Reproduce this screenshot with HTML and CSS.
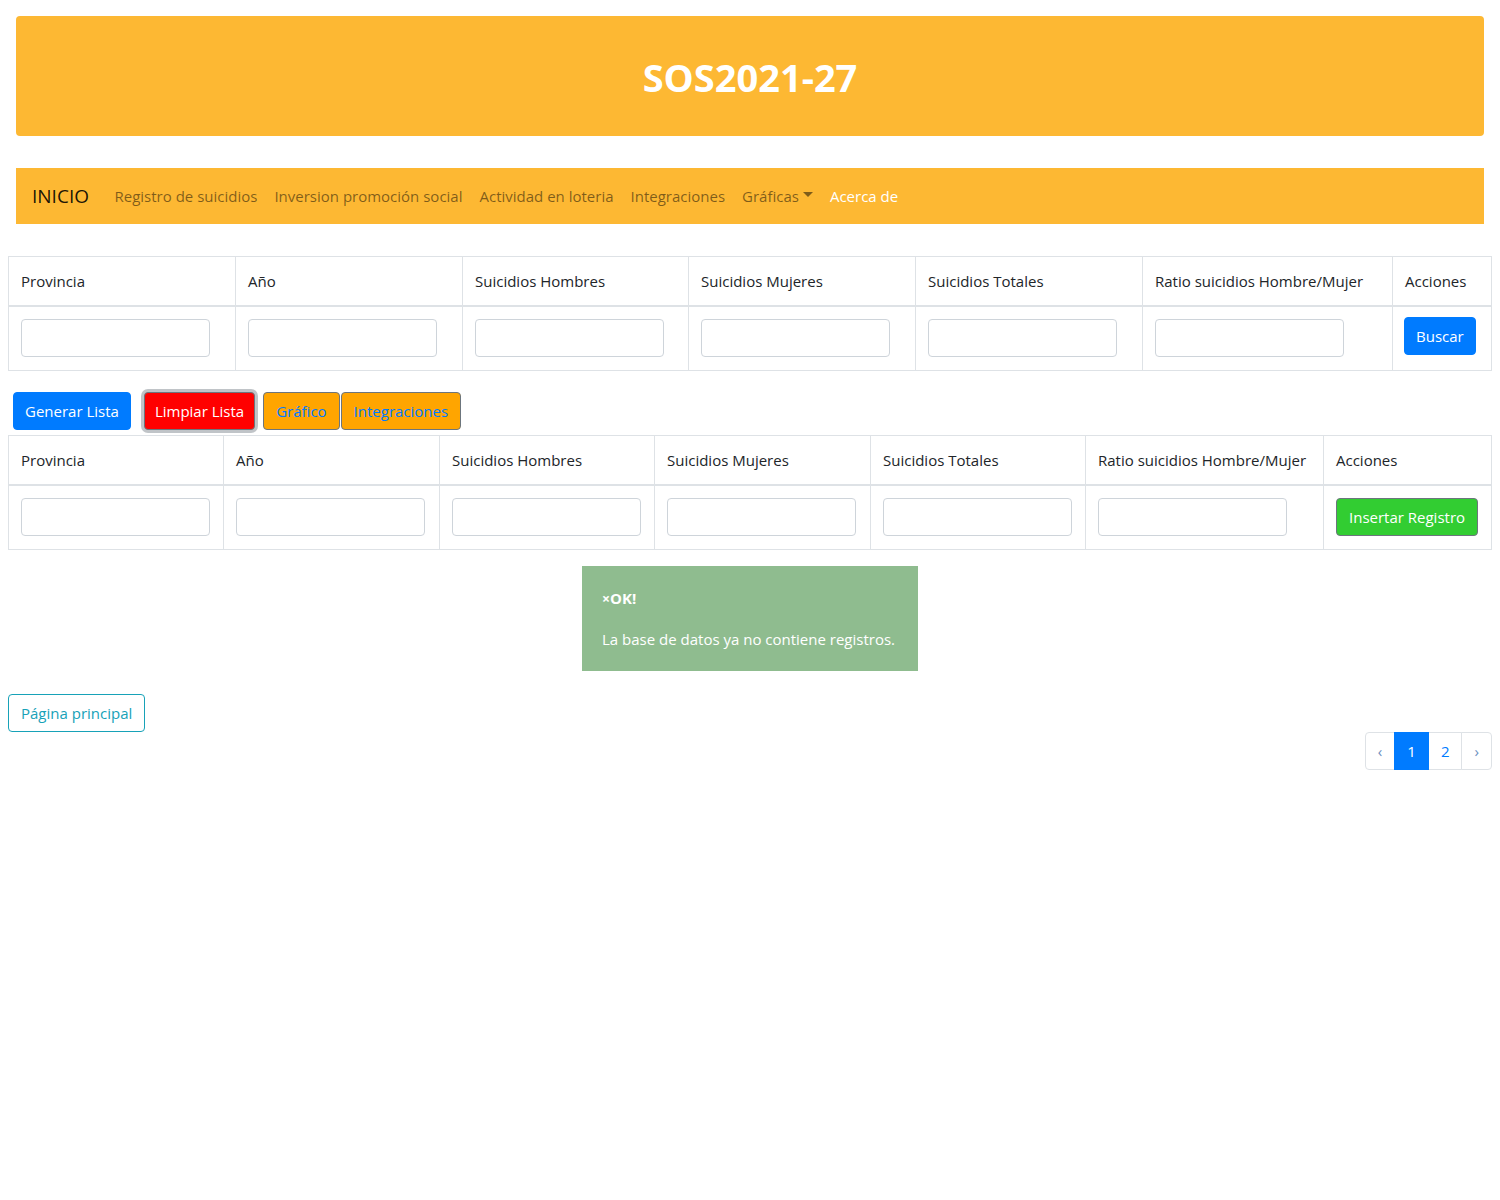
FILE: index.html
```html
<!DOCTYPE html>
<html lang="es">
<head>
<meta charset="utf-8">
<title>SOS2021-27</title>
<link rel="stylesheet" href="styles.css">
</head>
<body>
<header class="jumbotron">
  <h1 class="title">SOS2021-27</h1>
</header>

<nav class="navbar">
  <a class="brand" href="#">INICIO</a>
  <a class="nav-link" href="#">Registro de suicidios</a>
  <a class="nav-link" href="#">Inversion promoción social</a>
  <a class="nav-link" href="#">Actividad en loteria</a>
  <a class="nav-link" href="#">Integraciones</a>
  <a class="nav-link dropdown" href="#">Gráficas<span class="caret"></span></a>
  <a class="nav-link active" href="#">Acerca de</a>
</nav>

<table class="data-table t1">
  <colgroup>
    <col class="c1"><col class="c1"><col class="c1b"><col class="c1"><col class="c1"><col class="c1r"><col>
  </colgroup>
  <thead>
    <tr>
      <th>Provincia</th><th>Año</th><th>Suicidios Hombres</th><th>Suicidios Mujeres</th><th>Suicidios Totales</th><th>Ratio suicidios Hombre/Mujer</th><th>Acciones</th>
    </tr>
  </thead>
  <tbody>
    <tr>
      <td><input class="form-control" type="text"></td>
      <td><input class="form-control" type="text"></td>
      <td><input class="form-control" type="text"></td>
      <td><input class="form-control" type="text"></td>
      <td><input class="form-control" type="text"></td>
      <td><input class="form-control" type="text"></td>
      <td><button class="btn btn-primary">Buscar</button></td>
    </tr>
  </tbody>
</table>

<div class="actions">
  <button class="btn btn-primary gen">Generar Lista</button>
  <button class="btn btn-danger clear">Limpiar Lista</button>
  <button class="btn btn-orange graf">Gráfico</button>
  <button class="btn btn-orange integ">Integraciones</button>
</div>

<table class="data-table t2">
  <colgroup>
    <col class="c2"><col class="c2b"><col class="c2"><col class="c2b"><col class="c2"><col class="c2r"><col>
  </colgroup>
  <thead>
    <tr>
      <th>Provincia</th><th>Año</th><th>Suicidios Hombres</th><th>Suicidios Mujeres</th><th>Suicidios Totales</th><th>Ratio suicidios Hombre/Mujer</th><th>Acciones</th>
    </tr>
  </thead>
  <tbody>
    <tr>
      <td><input class="form-control" type="text"></td>
      <td><input class="form-control" type="text"></td>
      <td><input class="form-control" type="text"></td>
      <td><input class="form-control" type="text"></td>
      <td><input class="form-control" type="text"></td>
      <td><input class="form-control" type="text"></td>
      <td><button class="btn btn-green">Insertar Registro</button></td>
    </tr>
  </tbody>
</table>

<div class="alert-wrap">
  <div class="alert">
    <p class="alert-title"><span class="close">×</span>OK!</p>
    <p class="alert-text">La base de datos ya no contiene registros.</p>
  </div>
</div>

<div class="home-row">
  <button class="btn btn-outline-info">Página principal</button>
</div>

<div class="pager-row">
  <ul class="pagination">
    <li class="page-item"><a class="page-link arrow" href="#">‹</a></li>
    <li class="page-item"><a class="page-link current" href="#">1</a></li>
    <li class="page-item"><a class="page-link" href="#">2</a></li>
    <li class="page-item"><a class="page-link arrow" href="#">›</a></li>
  </ul>
</div>
</body>
</html>
```

FILE: styles.css
```css
* { box-sizing: border-box; }

body {
  margin: 8px;
  font-family: "Open Sans", "Noto Sans", "Liberation Sans", sans-serif;
  font-size: 15px;
  line-height: 24px;
  color: #212529;
  background: #fff;
}

.jumbotron {
  margin: 8px 8px 0;
  background: #fdb833;
  border-radius: 4px;
  padding: 37px 16px 35px;
  text-align: center;
}

.title {
  margin: 0;
  font-size: 38px;
  line-height: 48px;
  font-weight: 700;
  color: #fff;
}

.navbar {
  margin: 32px 8px 0;
  background: #fdb833;
  padding: 8px 16px;
  display: flex;
  align-items: center;
}

.brand {
  font-size: 19px;
  line-height: 30px;
  color: rgba(0, 0, 0, 0.9);
  text-decoration: none;
  margin-right: 17px;
  padding: 5px 0;
}

.nav-link {
  padding: 8px 8.5px;
  color: rgba(0, 0, 0, 0.5);
  text-decoration: none;
  line-height: 24px;
  display: flex;
  align-items: center;
}

.nav-link.active { color: #fff; }

.caret {
  display: inline-block;
  margin-left: 4px;
  border-top: 5px solid;
  border-left: 5px solid transparent;
  border-right: 5px solid transparent;
  transform: translateY(-2px);
}

.data-table {
  width: 100%;
  border-collapse: collapse;
  table-layout: fixed;
  margin-top: 32px;
}

.data-table th,
.data-table td {
  border: 1px solid #dee2e6;
  padding: 12px;
  text-align: left;
  vertical-align: top;
  font-weight: 400;
  white-space: nowrap;
}

.data-table td { padding-bottom: 13px; }

.data-table th { border-bottom-width: 2px; }

.t1 .c1 { width: 227px; }
.t1 .c1b { width: 226px; }
.t1 .c1r { width: 250px; }

.t2 { margin-top: 5px; }
.t2 .c2 { width: 215px; }
.t2 .c2b { width: 216px; }
.t2 .c2r { width: 238px; }

.form-control {
  display: block;
  width: 189px;
  height: 38px;
  border: 1px solid #ced4da;
  border-radius: 4px;
  background: #fff;
  font: inherit;
  padding: 6px 12px;
}

.btn {
  display: inline-block;
  font: inherit;
  line-height: 24px;
  padding: 6px 12px;
  border: 1px solid transparent;
  border-radius: 4px;
  cursor: pointer;
  white-space: nowrap;
}

.btn-primary {
  background: #007bff;
  border-color: #007bff;
  color: #fff;
}

.t1 .btn-primary {
  margin-top: -2px;
  margin-left: -1px;
  padding: 6px 11px;
}

.btn-danger {
  background: #ff0000;
  border-color: #6c757d;
  color: #fff;
  box-shadow: 0 0 0 3px rgba(130, 138, 145, 0.5);
}

.btn-orange {
  background: #ffa500;
  border-color: #6c757d;
  color: #007bff;
}

.btn-green {
  background: #32cd32;
  border-color: #6c757d;
  color: #fff;
}

.actions {
  display: flex;
  align-items: center;
  margin-top: 21px;
  padding-left: 5px;
}

.gen { margin-right: 13px; padding: 6px 11px; }
.clear { margin-right: 8px; padding: 6px 10px; }
.graf { margin-right: 1px; }

.alert-wrap {
  display: flex;
  justify-content: center;
  margin-top: 16px;
}

.alert {
  width: 336px;
  background: #8fbc8f;
  color: #fff;
  padding: 20px;
}

.alert p { margin: 0; }

.alert-title {
  font-weight: 700;
  line-height: 24px;
}

.close { font-size: 14px; }

.alert-text {
  margin-top: 16px !important;
  line-height: 24px;
}

.home-row { margin-top: 23px; }

.btn-outline-info {
  background: #fff;
  color: #17a2b8;
  border-color: #17a2b8;
}

.pager-row {
  display: flex;
  justify-content: flex-end;
}

.pagination {
  display: flex;
  list-style: none;
  margin: 0;
  padding: 0;
}

.page-link {
  display: block;
  height: 38px;
  padding: 6px 12px;
  line-height: 24px;
  color: #007bff;
  text-decoration: none;
  border: 1px solid #dee2e6;
  margin-left: -1px;
  background: #fff;
}

.page-item:first-child .page-link {
  border-radius: 4px 0 0 4px;
  margin-left: 0;
}

.page-item:last-child .page-link { border-radius: 0 4px 4px 0; }

.page-link.arrow {
  padding: 6px 12px;
  color: #6c8fc0;
}

.page-link.current {
  background: #007bff;
  border-color: #007bff;
  color: #fff;
  position: relative;
  z-index: 1;
}
```
